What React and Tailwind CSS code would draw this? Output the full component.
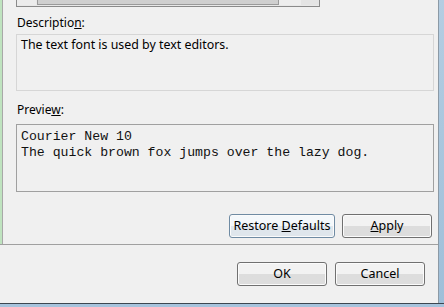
import React from 'react';

const ui = { fontFamily: '"Noto Sans", "Liberation Sans", sans-serif' };
const mono = { fontFamily: '"Liberation Mono", "Courier New", monospace' };

function WinButton({ children, width, blue }) {
  return (
    <button
      className={
        'h-[24px] rounded-[3px] border text-[12.5px] leading-none text-black shadow-[inset_0_0_0_1px_#fbfbfb] ' +
        (blue
          ? 'border-[#6f8ba3] bg-linear-to-b from-[#f4f8fb] from-50% to-[#dfe6ec] to-50%'
          : 'border-[#707070] bg-linear-to-b from-[#f2f2f2] from-50% to-[#dddddd] to-50%')
      }
      style={{ width, ...ui }}
    >
      {children}
    </button>
  );
}

export default function App() {
  return (
    <div className="w-[444px] h-[307px] overflow-hidden bg-[#f0f0f0] flex flex-col text-black" style={ui}>
      <div className="flex flex-1 min-h-0">
        <div className="w-[438px] flex flex-col">
          {/* preference page */}
          <div className="h-[244px] flex">
            <div className="w-[2px] bg-[#bfe3bf]" />
            <div className="w-[1px] bg-[#a8a8a8]" />
            <div className="flex-1 flex flex-col pl-[13px]">
              {/* bottom of the font list, with its scroll bar */}
              <div className="w-[304px] h-[7px] border-x border-b border-[#8a8a8a] bg-[#e8e8e8] flex">
                <div className="w-[19px] h-[5px] bg-[#ececec]" />
                <div className="w-[1px]" />
                <div className="w-[242px] h-[5px] border-x border-b border-[#9a9a9a] bg-[#cfcfcf]" />
                <div className="flex-1 h-[5px] bg-[#ededed]" />
                <div className="w-[18px] h-[5px] bg-[#e4e4e4]" />
              </div>

              <div className="mt-[8px] h-[16px] text-[12px] leading-[16px] pl-[1px]">
                Descriptio<span className="underline">n</span>:
              </div>
              <div className="mt-[3px] w-[418px] h-[57px] border border-[#d6d6d6] bg-[#f0f0f0] px-[4px] pt-[2px] text-[12.4px] leading-[16px]">
                The text font is used by text editors.
              </div>

              <div className="mt-[11px] h-[16px] text-[12px] leading-[16px] pl-[1px]">
                Previe<span className="underline">w</span>:
              </div>
              <div
                className="mt-[6px] w-[418px] h-[68px] border border-[#a0a0a0] bg-[#f0f0f0] px-[4px] pt-[4px] text-[13.2px] leading-[16px] whitespace-pre text-[#111]"
                style={mono}
              >
                <div>Courier New 10</div>
                <div>The quick brown fox jumps over the lazy dog.</div>
              </div>

              <div className="mt-[22px] flex justify-end gap-[7px] pr-[6px]">
                <WinButton width={106} blue>
                  Restore <span className="underline">D</span>efaults
                </WinButton>
                <WinButton width={90}>
                  <span className="underline">A</span>pply
                </WinButton>
              </div>
            </div>
          </div>
          <div className="h-[1px] bg-[#a0a0a0]" />
          {/* dialog buttons */}
          <div className="flex-1 flex justify-end items-start pt-[17px] pr-[13px] gap-[8px]">
            <WinButton width={90}>OK</WinButton>
            <WinButton width={90}>Cancel</WinButton>
          </div>
        </div>
        <div className="w-[1px] bg-[#8c9aa6]" />
        <div className="flex-1 bg-linear-to-b from-[#b4cde2] to-[#9fbfd9]" />
      </div>
      <div className="h-[1px] bg-[#3c4650]" />
      <div className="h-[3px] bg-[#a6c3dc]" />
    </div>
  );
}
